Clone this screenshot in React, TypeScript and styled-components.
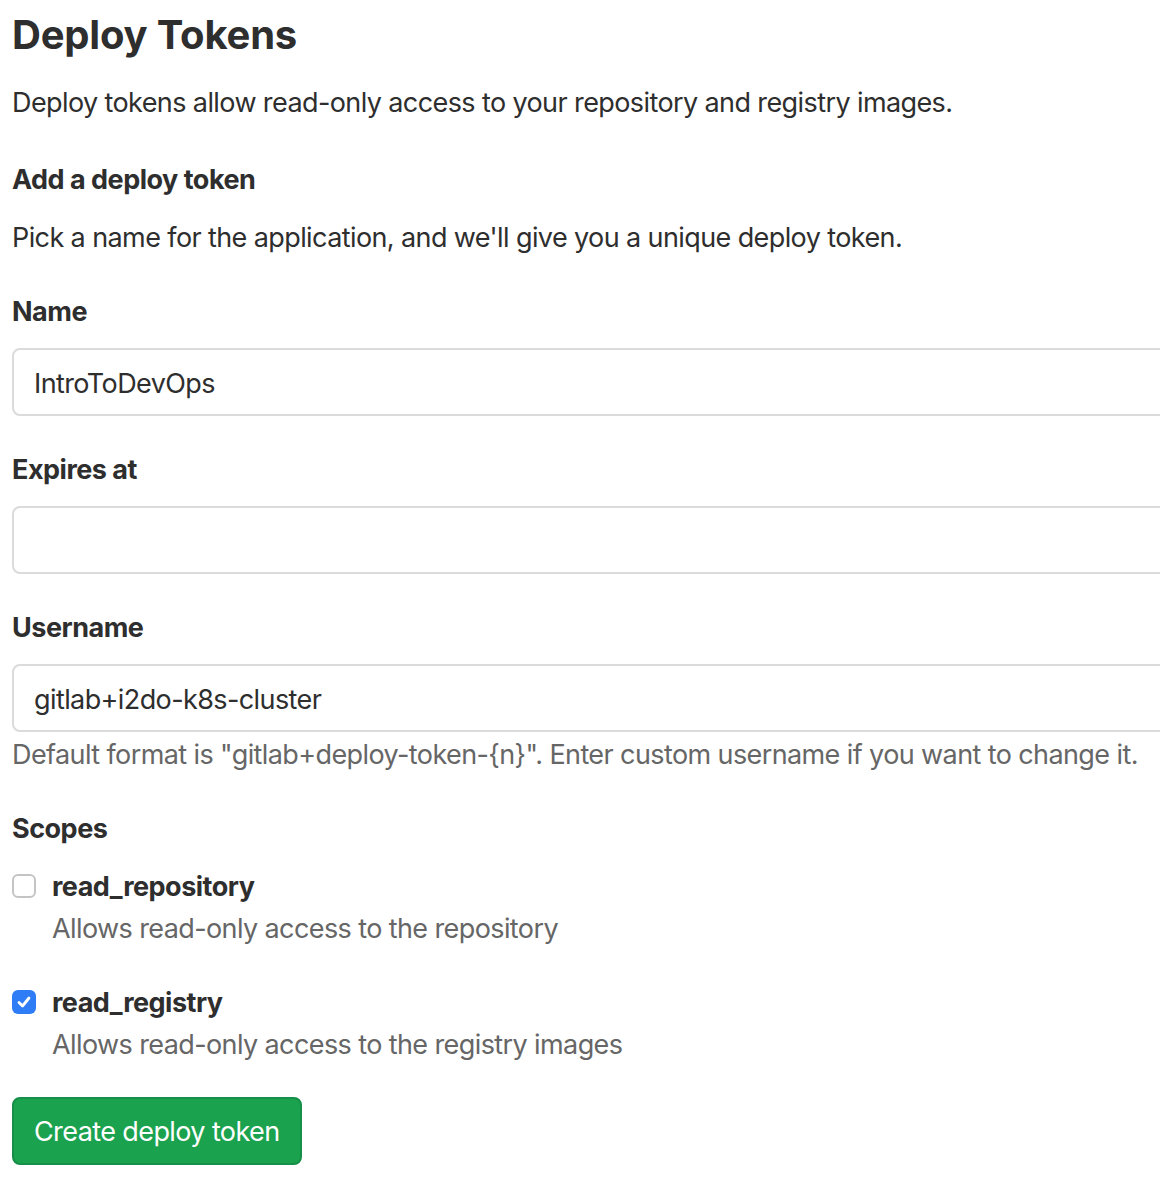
import React from "react";
import styled, { createGlobalStyle } from "styled-components";

const Global = createGlobalStyle`
  html, body { margin: 0; padding: 0; background: #fff; overflow: hidden; }
  body { font-family: Inter, "Noto Sans", "Liberation Sans", sans-serif; color: #2e2e2e; }
  * { box-sizing: border-box; }
`;

const Page = styled.div`
  width: 1300px;
  padding: 11px 0 0 12px;
`;

const Title = styled.h1`
  margin: 0;
  font-size: 40px;
  line-height: 48px;
  font-weight: 700;
  letter-spacing: -0.2px;
  color: #2e2e2e;
`;

const Text = styled.p<{ $mt: number }>`
  margin: ${(p) => p.$mt}px 0 0;
  font-size: 27px;
  line-height: 40px;
  letter-spacing: -0.6px;
  font-weight: 400;
  color: #2e2e2e;
`;

const SubTitle = styled.h2<{ $mt: number }>`
  margin: ${(p) => p.$mt}px 0 0;
  font-size: 27px;
  line-height: 40px;
  letter-spacing: -0.5px;
  font-weight: 700;
  color: #2e2e2e;
`;

const Label = styled.label<{ $mt: number }>`
  display: block;
  margin: ${(p) => p.$mt}px 0 0;
  font-size: 27px;
  line-height: 40px;
  letter-spacing: -0.5px;
  font-weight: 700;
  color: #2e2e2e;
`;

const Input = styled.input`
  display: block;
  margin-top: 16px;
  width: 1250px;
  height: 68px;
  padding: 2px 20px 0;
  border: 2px solid #dbdbdb;
  border-radius: 8px;
  font-family: inherit;
  font-size: 27px;
  letter-spacing: -0.6px;
  color: #2e2e2e;
  background: #fff;
  outline: none;
`;

const Help = styled.p`
  margin: 3px 0 0;
  font-size: 27px;
  line-height: 40px;
  letter-spacing: -0.6px;
  color: #666;
`;

const Scope = styled.div<{ $mt: number }>`
  margin-top: ${(p) => p.$mt}px;
  display: grid;
  grid-template-columns: 24px 1fr;
  column-gap: 16px;
  row-gap: 2px;
  align-items: center;
`;

const Box = styled.span<{ $checked: boolean }>`
  width: 24px;
  height: 24px;
  margin-top: -2px;
  border-radius: 6px;
  border: ${(p) => (p.$checked ? "none" : "2px solid #c4c4c4")};
  background: ${(p) => (p.$checked ? "#2f7df6" : "#fff")};
  display: flex;
  align-items: center;
  justify-content: center;
`;

const ScopeName = styled.span`
  font-size: 27px;
  line-height: 40px;
  letter-spacing: -0.5px;
  font-weight: 700;
  color: #2e2e2e;
`;

const ScopeDesc = styled.span`
  grid-column: 2;
  font-size: 27px;
  line-height: 40px;
  letter-spacing: -0.6px;
  color: #666;
`;

const Button = styled.button`
  display: block;
  margin-top: 32px;
  height: 68px;
  padding: 0 20px;
  border: 2px solid #168f48;
  border-radius: 8px;
  background: #1ba24f;
  color: #fff;
  font-family: inherit;
  font-size: 27px;
  letter-spacing: -0.6px;
  font-weight: 400;
`;

const Check = () => (
  <svg width="18" height="18" viewBox="0 0 18 18">
    <path d="M4 9.5 L7.5 13 L14 5" fill="none" stroke="#fff" strokeWidth="2.8" strokeLinecap="round" strokeLinejoin="round" />
  </svg>
);

export default function App() {
  return (
    <Page>
      <Global />
      <Title>Deploy Tokens</Title>
      <Text $mt={24}>Deploy tokens allow read-only access to your repository and registry images.</Text>
      <SubTitle $mt={37}>Add a deploy token</SubTitle>
      <Text $mt={18}>Pick a name for the application, and we'll give you a unique deploy token.</Text>
      <Label $mt={34}>Name</Label>
      <Input defaultValue="IntroToDevOps" />
      <Label $mt={34}>Expires at</Label>
      <Input defaultValue="" />
      <Label $mt={34}>Username</Label>
      <Input defaultValue="gitlab+i2do-k8s-cluster" />
      <Help>Default format is "gitlab+deploy-token-{"{n}"}". Enter custom username if you want to change it.</Help>
      <Label $mt={34}>Scopes</Label>
      <Scope $mt={18}>
        <Box $checked={false} />
        <ScopeName>read_repository</ScopeName>
        <ScopeDesc>Allows read-only access to the repository</ScopeDesc>
      </Scope>
      <Scope $mt={34}>
        <Box $checked={true}>
          <Check />
        </Box>
        <ScopeName>read_registry</ScopeName>
        <ScopeDesc>Allows read-only access to the registry images</ScopeDesc>
      </Scope>
      <Button>Create deploy token</Button>
    </Page>
  );
}
